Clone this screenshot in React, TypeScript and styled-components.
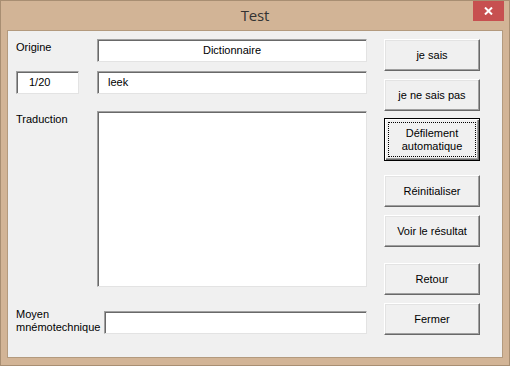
import * as React from "react";
import styled, { createGlobalStyle } from "styled-components";

const GlobalStyle = createGlobalStyle`
  html, body {
    margin: 0;
    padding: 0;
    background: #d2b496;
  }
`;

const Window = styled.div`
  width: 510px;
  height: 366px;
  box-sizing: border-box;
  border: 1px solid #a88e72;
  background: #d2b496;
  display: flex;
  flex-direction: column;
  font-family: "Liberation Sans", Arial, sans-serif;
  font-size: 11px;
  color: #000;
`;

const TitleBar = styled.div`
  height: 29px;
  display: grid;
  grid-template-columns: 1fr auto 1fr;
`;

const Title = styled.div`
  grid-column: 2;
  font-family: "Open Sans", "Noto Sans", sans-serif;
  font-size: 15px;
  color: #333;
  line-height: 28px;
  letter-spacing: -0.2px;
`;

const CloseButton = styled.div`
  grid-column: 3;
  justify-self: end;
  align-self: start;
  width: 31px;
  height: 20px;
  margin-right: 5px;
  background: #c75050;
  display: flex;
  align-items: center;
  justify-content: center;
`;

const Client = styled.div`
  flex: 1;
  margin: 0 6px 7px;
  border: 1px solid #b39a7e;
  background: #f0f0f0;
  display: flex;
  gap: 17px;
  padding: 8px 0 0 8px;
`;

const Form = styled.div`
  width: 351px;
  display: flex;
  flex-direction: column;
`;

const Row = styled.div<{ $top?: number; $height?: number }>`
  display: flex;
  gap: 18px;
  margin-top: ${p => p.$top ?? 0}px;
  height: ${p => p.$height ?? 23}px;
`;

const Label = styled.div<{ $width?: number; $shift?: number }>`
  width: ${p => p.$width ?? 63}px;
  flex-shrink: 0;
  padding-top: 2px;
  margin-top: ${p => p.$shift ?? 0}px;
  line-height: 13px;
`;

const Field = styled.div<{ $align?: string }>`
  flex: 1;
  box-sizing: border-box;
  background: #fff;
  border: 1px solid;
  border-color: #a0a0a0 #e3e3e3 #e3e3e3 #a0a0a0;
  box-shadow: inset 1px 1px 0 #696969;
  padding: 0 10px;
  text-align: ${p => p.$align ?? "left"};
  line-height: 20px;
`;

const Counter = styled(Field)`
  flex: 0 0 63px;
  padding-left: 12px;
`;

const ButtonColumn = styled.div`
  width: 96px;
  display: flex;
  flex-direction: column;
`;

const Button = styled.div<{ $top: number; $height?: number; $focused?: boolean }>`
  margin-top: ${p => p.$top}px;
  height: ${p => p.$height ?? 32}px;
  box-sizing: border-box;
  background: #f0f0f0;
  border: 1px solid;
  border-color: ${p =>
    p.$focused ? "#000" : "#fff #696969 #696969 #fff"};
  box-shadow: ${p =>
    p.$focused
      ? "inset 1px 1px 0 #fff, inset -1px -1px 0 #696969, inset -2px -2px 0 #a0a0a0"
      : "inset -1px -1px 0 #a0a0a0, inset 1px 1px 0 #e3e3e3"};
  display: flex;
  align-items: center;
  justify-content: center;
  text-align: center;
  line-height: 13px;
  padding: ${p => (p.$focused ? "3px" : "0")};
`;

const FocusRect = styled.div`
  flex: 1;
  align-self: stretch;
  border: 1px dotted #000;
  display: flex;
  align-items: center;
  justify-content: center;
`;

function CloseIcon() {
  return (
    <svg width="9" height="8" viewBox="0 0 9 8">
      <path d="M1 0.5 L8 7.5 M8 0.5 L1 7.5" stroke="#fff" strokeWidth="2" />
    </svg>
  );
}

export default function App() {
  return (
    <Window>
      <GlobalStyle />
      <TitleBar>
        <Title>Test</Title>
        <CloseButton>
          <CloseIcon />
        </CloseButton>
      </TitleBar>
      <Client>
        <Form>
          <Row>
            <Label>Origine</Label>
            <Field $align="center">Dictionnaire</Field>
          </Row>
          <Row $top={9}>
            <Counter>1/20</Counter>
            <Field>leek</Field>
          </Row>
          <Row $top={17} $height={176}>
            <Label>Traduction</Label>
            <Field />
          </Row>
          <Row $top={24} style={{ gap: 0 }}>
            <Label $width={88} $shift={-5}>
              Moyen
              <br />
              mnémotechnique
            </Label>
            <Field />
          </Row>
        </Form>
        <ButtonColumn>
          <Button $top={0}>je sais</Button>
          <Button $top={8}>je ne sais pas</Button>
          <Button $top={7} $height={43} $focused>
            <FocusRect>
              Défilement
              <br />
              automatique
            </FocusRect>
          </Button>
          <Button $top={14}>Réinitialiser</Button>
          <Button $top={8}>Voir le résultat</Button>
          <Button $top={16}>Retour</Button>
          <Button $top={8}>Fermer</Button>
        </ButtonColumn>
      </Client>
    </Window>
  );
}
